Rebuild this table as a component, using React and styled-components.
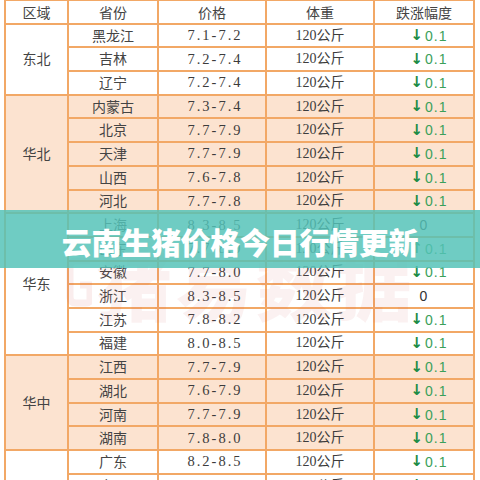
import styled, { createGlobalStyle } from "styled-components"

const GlobalStyle = createGlobalStyle`
  html, body {
    margin: 0;
    padding: 0;
    background: #ffffff;
  }
`

const Page = styled.div`
  position: relative;
  width: 480px;
  height: 480px;
  overflow: hidden;
  background: #ffffff;
  padding-left: 4px;
  box-sizing: border-box;
`

const Table = styled.table`
  border-collapse: collapse;
  table-layout: fixed;
  width: 469px;
  margin-top: -1px;
  font-family: "Liberation Serif", "Noto Sans CJK SC", serif;
  color: #3c3c3c;
  font-size: 14px;
`

const Col = styled.col`
  width: ${(p) => p.$w}px;
`

const Row = styled.tr`
  height: 23.7px;
  background: ${(p) => (p.$shade ? "#fce3d0" : "#ffffff")};
`

const Cell = styled.td`
  border: 2px solid #f2a866;
  padding: 0;
  text-align: center;
  vertical-align: middle;
  line-height: 1;
  white-space: nowrap;
  overflow: hidden;
`

const HeadCell = styled(Cell).attrs({ as: "th" })`
  font-weight: normal;
  font-family: "Noto Sans CJK SC", sans-serif;
  font-size: 14px;
  color: #444;
`

const Name = styled.span`
  font-family: "Noto Sans CJK SC", sans-serif;
  font-size: 14px;
  color: #444;
`

const Price = styled.span`
  display: inline-block;
  padding-left: 6px;
  letter-spacing: 2px;
  font-size: 14.5px;
`

const Weight = styled.span`
  font-size: 14px;
  font-family: "Liberation Serif", "Noto Sans CJK SC", serif;
`

const Change = styled.span`
  display: inline-flex;
  align-items: center;
  padding-left: ${(p) => (p.$zero ? "0" : "10px")};
  font-family: "Liberation Sans", "DejaVu Sans", sans-serif;
  font-size: 14px;
  letter-spacing: 1px;
  color: ${(p) => (p.$zero ? "#333" : "#3ba05a")};
`

const Arrow = styled.b`
  color: #1f8c45;
  font-family: "DejaVu Sans", sans-serif;
  font-size: 15px;
  margin-right: 1px;
`

const Banner = styled.div`
  position: absolute;
  left: 0;
  right: 0;
  top: 210px;
  height: 58px;
  background: rgba(84, 194, 184, 0.84);
  display: flex;
  align-items: center;
  justify-content: center;
  padding-top: 4px;
  box-sizing: border-box;
`

const Title = styled.h1`
  margin: 0;
  color: #ffffff;
  font-family: "Noto Sans CJK SC", sans-serif;
  font-weight: 900;
  font-size: 30px;
  letter-spacing: -0.3px;
`

const Watermark = styled.div`
  position: absolute;
  left: 66px;
  top: 244px;
  display: flex;
  align-items: center;
  gap: 4px;
  pointer-events: none;
  color: rgba(205, 90, 90, 0.085);
  font-family: "Noto Sans CJK SC", sans-serif;
  font-weight: 900;
  font-size: 76px;
  letter-spacing: 4px;
  line-height: 1;
`

const regions = [
  {
    name: "东北",
    rows: [
      ["黑龙江", "7.1-7.2", "down"],
      ["吉林", "7.2-7.4", "down"],
      ["辽宁", "7.2-7.4", "down"],
    ],
  },
  {
    name: "华北",
    shade: true,
    rows: [
      ["内蒙古", "7.3-7.4", "down"],
      ["北京", "7.7-7.9", "down"],
      ["天津", "7.7-7.9", "down"],
      ["山西", "7.6-7.8", "down"],
      ["河北", "7.7-7.8", "down"],
    ],
  },
  {
    name: "华东",
    rows: [
      ["上海", "8.3-8.5", "zero"],
      ["山东", "7.7-8.0", "up"],
      ["安徽", "7.7-8.0", "down"],
      ["浙江", "8.3-8.5", "zero"],
      ["江苏", "7.8-8.2", "down"],
      ["福建", "8.0-8.5", "down"],
    ],
  },
  {
    name: "华中",
    shade: true,
    rows: [
      ["江西", "7.7-7.9", "down"],
      ["湖北", "7.6-7.9", "down"],
      ["河南", "7.7-7.9", "down"],
      ["湖南", "7.8-8.0", "down"],
    ],
  },
  {
    name: "华南",
    rows: [
      ["广东", "8.2-8.5", "down"],
      ["广西", "7.9-8.2", "down"],
      ["海南", "8.0-8.3", "down"],
      ["云南", "7.8-8.1", "down"],
    ],
  },
]

function ChangeValue({ kind }) {
  if (kind === "zero") return <Change $zero>0</Change>
  return (
    <Change>
      <Arrow>{kind === "up" ? "↑" : "↓"}</Arrow>0.1
    </Change>
  )
}

function WatermarkLogo() {
  return (
    <svg width="26" height="54" viewBox="0 0 26 54">
      <path
        d="M24 6 H10 Q4 6 4 12 V42 Q4 48 10 48 H20 Q24 48 24 44 V30 H14"
        fill="none"
        stroke="rgba(205,90,90,0.11)"
        strokeWidth="7"
      />
    </svg>
  )
}

export default function App() {
  return (
    <>
      <GlobalStyle />
      <Page>
        <Table>
          <colgroup>
            <Col $w={63} />
            <Col $w={90} />
            <Col $w={108} />
            <Col $w={108} />
            <Col $w={100} />
          </colgroup>
          <thead>
            <Row>
              <HeadCell>区域</HeadCell>
              <HeadCell>省份</HeadCell>
              <HeadCell>价格</HeadCell>
              <HeadCell>体重</HeadCell>
              <HeadCell>跌涨幅度</HeadCell>
            </Row>
          </thead>
          <tbody>
            {regions.map((region) =>
              region.rows.map(([prov, price, kind], i) => (
                <Row key={prov} $shade={region.shade}>
                  {i === 0 && (
                    <Cell rowSpan={region.rows.length}>
                      <Name>{region.name}</Name>
                    </Cell>
                  )}
                  <Cell>
                    <Name>{prov}</Name>
                  </Cell>
                  <Cell>
                    <Price>{price}</Price>
                  </Cell>
                  <Cell>
                    <Weight>120公斤</Weight>
                  </Cell>
                  <Cell>
                    <ChangeValue kind={kind} />
                  </Cell>
                </Row>
              ))
            )}
          </tbody>
        </Table>
        <Watermark>
          <WatermarkLogo />
          猪易数据
        </Watermark>
        <Banner>
          <Title>云南生猪价格今日行情更新</Title>
        </Banner>
      </Page>
    </>
  )
}
